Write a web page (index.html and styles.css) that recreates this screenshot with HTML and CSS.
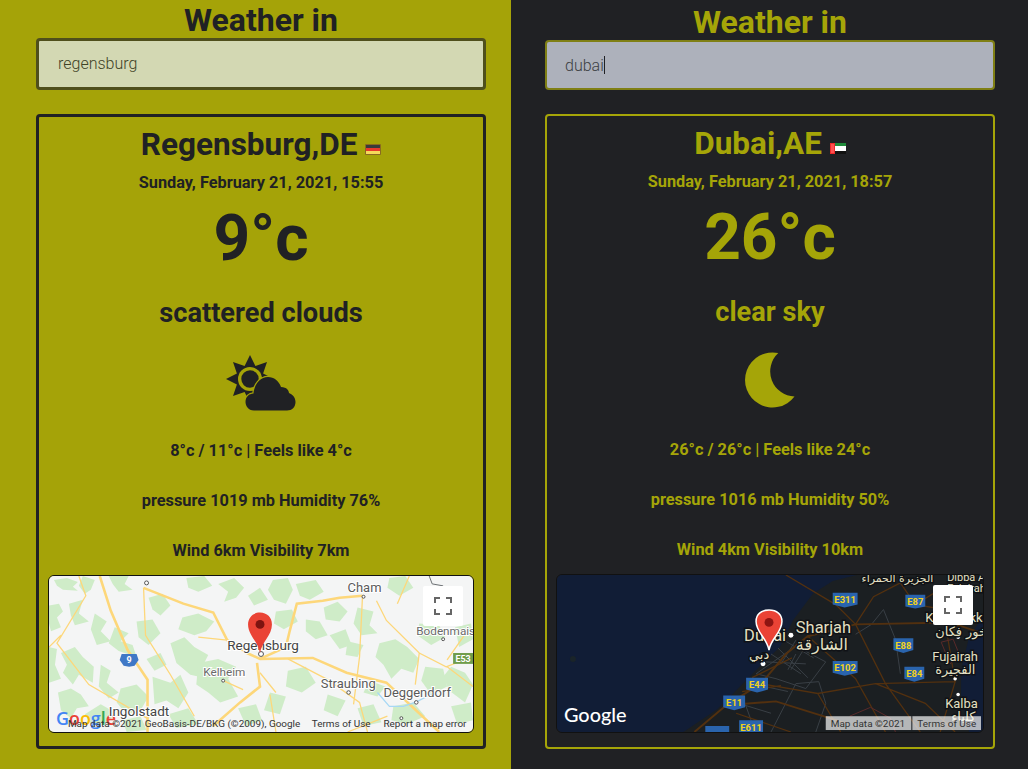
FILE: index.html
```html
<!DOCTYPE html>
<html lang="en">
<head>
<meta charset="utf-8">
<title>Weather</title>
<link rel="stylesheet" href="styles.css">
</head>
<body>
<main class="app">
  <section class="pane pane-light">
    <h1 class="title">Weather in</h1>
    <input class="search" type="text" value="regensburg" aria-label="City">
    <article class="card">
      <h2 class="city">Regensburg,DE
        <svg class="flag" viewBox="0 0 16 11"><rect width="16" height="11" rx="1" fill="#8a6a20"/><rect x="1" y="1" width="14" height="3" fill="#3a3a3a"/><rect x="1" y="4" width="14" height="3" fill="#e8382c"/><rect x="1" y="7" width="14" height="3" fill="#f5d95a"/></svg>
      </h2>
      <p class="date">Sunday, February 21, 2021, 15:55</p>
      <p class="temp">9°c</p>
      <p class="desc">scattered clouds</p>
      <div class="icon">
        <svg width="68" height="60" viewBox="0 0 68 60">
          <polygon class="ink" points="23,0 28.4,10.9 40,7 36.1,18.6 47,24 36.1,29.4 40,41 28.4,37.1 23,48 17.6,37.1 6,41 9.9,29.4 -1,24 9.9,18.6 6,7 17.6,10.9"/>
          <circle class="gap" cx="23" cy="24" r="12"/>
          <circle class="ink" cx="23" cy="24" r="8.7"/>
          <path class="ink cloud" d="M27 55.500C21 55.500 18.500 50.500 18.500 47C18.500 42 22 38.500 26.500 38.500C27 30 33 22 41 22C47 22 52 26 54 32C60 32 62 36 62 38C66 39.500 68.500 43 68.500 47C68.500 52 65 55.500 60 55.500Z"/>
        </svg>
      </div>
      <p class="line line-first">8°c / 11°c | Feels like 4°c</p>
      <p class="line">pressure 1019 mb Humidity 76%</p>
      <p class="line">Wind 6km Visibility 7km</p>
      <div class="map map-day">
        <svg class="map-art" viewBox="0 0 426 158" preserveAspectRatio="none">
          <rect width="426" height="158" fill="#f4f5f5"/>
          <g fill="#cfecc8">
            <polygon points="5,4 18,2 29,6 24,11 29,15 14,14 8,10"/><polygon points="34,0 46,4 42,14 36,18 30,10"/><polygon points="60,0 80,0 76,8 84,14 70,16 64,8"/>
            <polygon points="0,30 10,28 14,36 8,42 12,52 2,56 0,48"/><polygon points="20,28 34,24 30,38 40,46 26,50 22,40"/><polygon points="46,38 58,46 52,56 62,66 48,70 42,54"/>
            <polygon points="66,52 80,58 72,66 84,70 88,82 70,76 60,68"/><polygon points="12,78 26,72 34,82 45,92 44,108 30,100 24,110 14,98 18,90"/><polygon points="0,72 8,74 6,90 12,104 0,108"/>
            <polygon points="52,90 62,96 58,108 70,118 60,124 50,112"/><polygon points="9,118 22,114 32,120 40,132 28,134 22,144 12,136"/><polygon points="36,140 52,130 66,138 60,148 42,150"/>
            <polygon points="72,114 88,110 100,122 92,136 78,140 68,128"/><polygon points="104,102 122,108 132,100 140,118 130,134 118,126 106,130"/><polygon points="122,68 136,62 146,72 160,80 154,92 160,104 142,100 128,88"/>
            <polygon points="150,88 170,84 188,92 180,104 190,122 172,128 160,118 148,110"/><polygon points="134,42 150,38 166,46 158,56 146,60 130,54"/><polygon points="100,22 114,18 122,30 112,40 104,34"/>
            <polygon points="88,46 104,44 112,58 100,70 90,62"/><polygon points="112,78 118,90 106,96 98,84"/><polygon points="170,8 186,2 196,12 188,22 176,26 180,16"/>
            <polygon points="138,2 156,0 164,10 150,16 140,12"/><polygon points="200,20 212,12 220,24 206,30"/><polygon points="225,4 240,2 245,14 238,28 226,24 220,14"/>
            <polygon points="248,8 268,4 276,16 262,24 252,20"/><polygon points="276,32 290,26 300,36 292,46 278,44"/><polygon points="228,36 244,34 250,46 236,54 226,48"/>
            <polygon points="258,44 272,46 280,60 268,64 258,56"/><polygon points="282,60 298,54 304,70 292,74"/><polygon points="310,32 326,36 322,50 330,58 314,60 306,48"/>
            <polygon points="332,68 348,64 360,72 372,84 366,98 354,94 344,104 336,90 328,82"/><polygon points="300,66 316,70 310,82 298,80"/><polygon points="385,14 400,18 410,30 404,42 392,38 380,28"/>
            <polygon points="342,2 358,0 366,12 352,20 340,12"/><polygon points="372,48 392,50 398,62 384,70 370,60"/><polygon points="408,52 424,48 426,64 412,72"/>
            <polygon points="404,92 418,98 426,110 418,128 402,116 396,102"/><polygon points="378,92 396,94 400,112 384,120 374,106"/><polygon points="322,106 338,112 330,122 316,118"/>
            <polygon points="240,96 258,92 268,108 254,118 238,112"/><polygon points="222,118 238,122 232,140 216,136"/><polygon points="280,120 298,126 290,142 276,136"/>
            <polygon points="346,132 366,128 378,142 360,150 344,146"/><polygon points="404,132 424,128 426,146 410,150"/><polygon points="310,134 326,130 334,148 316,152"/>
            <polygon points="190,134 208,130 214,146 198,152"/><polygon points="120,140 140,134 150,150 128,154"/><polygon points="74,146 92,142 98,156 78,158"/>
          </g>
          <g fill="none" stroke="#fdd77a">
            <path stroke-width="2.600" d="M51 0 62 35 79 75 99 105 99 158M95 12 135 28 165 37 179 65 199 78 212 84 265 83 299 98 339 108 392 158"/>
            <path stroke-width="2.600" d="M209 88 212 112 192 128 165 152M212 84 238 72 242 55 249 28 275 25 292 22 315 20"/>
            <path stroke-width="1.300" d="M30 0 37 20 8 68 40 110 100 145M95 12 97 60 122 100 146 142M179 65 150 62M240 84 280 105 312 128 320 158M315 20 312 82 306 130M329 25 339 45 372 78 399 92 425 82M400 92 426 112M350 28 362 0M212 98 228 118M420 56 400 85M222 120 228 158M175 106 195 115M372 78 368 110M0 72 12 60M340 142 300 158"/>
          </g>
          <path fill="none" stroke="#a7d8f5" stroke-width="1.200" d="M330 118 342 132 356 132 368 128 388 118"/>
          <path fill="none" stroke="#6b6f73" d="M382 0 385 8 396 10"/>
          <path fill="#3f78c6" d="M73 79H88L90 85 86 91 80.500 92 75 91 71 85Z"/>
          <text class="shield-text" x="80.500" y="88.500" text-anchor="middle">9</text>
          <rect x="406" y="78" width="20" height="11" fill="#6f9c4b"/>
          <text class="shield-text" x="416" y="87" text-anchor="middle">E53</text>
          <g class="dot-day"><circle cx="98" cy="7" r="2"/><circle cx="213" cy="79" r="2.500"/><circle cx="175" cy="106" r="1.500"/><circle cx="316" cy="21" r="1.500"/><circle cx="396" cy="64" r="1.500"/><circle cx="301" cy="118" r="1.800"/><circle cx="369" cy="128" r="1.800"/><circle cx="354" cy="144" r="1.500"/></g>
          <text class="place big" x="179" y="75">Regensburg</text>
          <text class="place" x="300" y="16">Cham</text>
          <text class="place small" x="369" y="60">Bodenmais</text>
          <text class="place small" x="155" y="101">Kelheim</text>
          <text class="place" x="273" y="113">Straubing</text>
          <text class="place" x="336" y="123">Deggendorf</text>
          <text class="logo-color" x="7" y="151"><tspan fill="#4285f4">G</tspan><tspan fill="#ea4335">o</tspan><tspan fill="#fbbc05">o</tspan><tspan fill="#4285f4">g</tspan><tspan fill="#34a853">l</tspan><tspan fill="#ea4335">e</tspan></text>
          <text class="place big" x="60" y="142">Ingolstadt</text>
          <text class="legal" x="19" y="153">Map data ©2021 GeoBasis-DE/BKG (©2009), Google</text>
          <text class="legal" x="264" y="153">Terms of Use</text>
          <text class="legal" x="336" y="153">Report a map error</text>
          <path class="pin" d="M212 78C210 66 200 60 200 49C200 42 205 37 212 37S224 42 224 49C224 60 214 66 212 78Z"/>
          <circle cx="212" cy="49" r="4.500" fill="#7d1310"/>
        </svg>
        <button class="full-btn" type="button" aria-label="Fullscreen">
          <svg width="18" height="18" viewBox="0 0 18 18"><path class="corners" d="M1 6V1H6M12 1H17V6M17 12V17H12M6 17H1V12"/></svg>
        </button>
      </div>
    </article>
  </section>

  <section class="pane pane-dark">
    <h1 class="title">Weather in</h1>
    <div class="search search-typing"><span>dubai</span><i class="caret"></i></div>
    <article class="card">
      <h2 class="city">Dubai,AE
        <svg class="flag" viewBox="0 0 16 11"><rect width="16" height="11" fill="#111"/><rect x="5" y="0" width="11" height="3" fill="#1f8a3a"/><rect x="5" y="3" width="11" height="5" fill="#fff"/><rect width="5" height="11" fill="#ee2a2a"/><rect x="1" y="1" width="3" height="9" fill="#ff5050"/></svg>
      </h2>
      <p class="date">Sunday, February 21, 2021, 18:57</p>
      <p class="temp">26°c</p>
      <p class="desc">clear sky</p>
      <div class="icon">
        <svg width="52" height="60" viewBox="0 0 52 60"><path class="ink" d="M34.300 1.100A27.500 27.500 0 1 0 50.500 44.500A25 25 0 0 1 34.300 1.100Z"/></svg>
      </div>
      <p class="line line-first">26°c / 26°c | Feels like 24°c</p>
      <p class="line">pressure 1016 mb Humidity 50%</p>
      <p class="line">Wind 4km Visibility 10km</p>
      <div class="map map-night">
        <svg class="map-art" viewBox="0 0 428 159" preserveAspectRatio="none">
          <rect width="428" height="159" fill="#111d36"/>
          <path fill="#1b1f22" d="M127 159 161 136 181 116 207 89 224 73 237 46 257 19 277 6 301 0H428V42L414 63 406 96 406 129 411 143 414 159Z"/>
          <g fill="none" stroke="#3a4046" stroke-width="1"><path d="M215 159 240 110 263 108 270 130 260 159M340 65 328 35 316 50 300 60M340 65 345 100M200 100 240 72 270 88 250 115 220 105Z"/><path d="M210 88 250 90M222 74 252 104M232 96 240 80M215 80 245 100M228 66 258 84M240 66 225 90M250 72 235 96M196 110 232 118M176 128 215 140M186 122 196 150"/></g>
          <g fill="none" stroke="#52300f" stroke-width="1.300">
            <path stroke-width="2" d="M138 159 170 132 205 110 230 80 252 62 300 50 395 48 430 60M170 132 220 128 290 150"/>
            <path d="M205 110 262 120 320 110 400 108M252 62 300 105 330 159M300 50 330 110 365 159M300 50 318 22 345 8 360 30 420 40 392 60 400 108 385 159M262 120 285 159M230 0 280 30 300 50M360 30 400 5M320 110 370 130 400 159M180 140 235 159M196 104 236 84M186 118 225 112"/>
          </g>
          <path fill="none" stroke="#5a2a2a" d="M294 143 315 134 335 145 340 159M386 68 398 65 404 80 395 90Z"/>
          <g fill="#2a64ad">
            <path d="M190 104H212V116L201 119 190 116Z"/><path d="M167 122H189V134L178 137 167 134Z"/><path d="M149 153H173V162H149Z"/><path d="M183 147H207V162H183Z"/>
            <path d="M277 18H302V30L289 33 277 30Z"/><path d="M350 20H370V32L360 34 350 32Z"/><path d="M338 64H358V76L348 79 338 76Z"/><path d="M277 87H302V99L289 102 277 99Z"/><path d="M349 93H369V105L359 108 349 105Z"/>
          </g>
          <g class="shield-night" text-anchor="middle">
            <text x="201" y="114.500">E44</text><text x="178" y="132.500">E11</text><text x="195" y="158">E611</text><text x="289.500" y="28.500">E311</text><text x="360" y="30.500">E87</text><text x="348" y="74.500">E88</text><text x="289.500" y="97.500">E102</text><text x="359" y="103.500">E84</text>
          </g>
          <g fill="#fff"><circle cx="207" cy="90" r="2.500"/><circle cx="235" cy="61" r="2.500"/><circle cx="403" cy="63" r="1.800"/><circle cx="400" cy="105" r="1.800"/><circle cx="403" cy="121" r="1.800"/></g>
          <circle cx="16" cy="85" r="3" fill="#1a2429"/>
          <text class="halo halo-big" x="188" y="67">Dubai</text>
          <text class="halo arabic" x="193" y="85">دبي</text>
          <text class="halo halo-big" x="240" y="59">Sharjah</text>
          <text class="halo arabic halo-ar" x="240" y="76">الشارقة</text>
          <text class="halo" x="377" y="87">Fujairah</text>
          <text class="halo arabic" x="380" y="100">الفجيرة</text>
          <text class="halo" x="390" y="135">Kalba</text>
          <text class="halo arabic" x="396" y="148">كلباء</text>
          <text class="halo" x="370" y="48">Khor Fakkan</text>
          <text class="halo arabic" x="380" y="62">خور فكان</text>
          <text class="halo tiny" x="392" y="6">Dibba Al</text>
          <text class="halo tiny" x="392" y="17">Fujairah</text>
          <text class="halo arabic tiny" x="306" y="7">الجزيرة الحمراء</text>
          <text class="logo-white" x="7" y="149">Google</text>
          <rect x="270" y="143" width="86" height="14" fill="#fff" fill-opacity=".68"/>
          <rect x="357" y="143" width="69" height="14" fill="#fff" fill-opacity=".68"/>
          <text class="legal" x="275" y="154">Map data ©2021</text>
          <text class="legal" x="362" y="154">Terms of Use</text>
          <path class="pin pin-outline" d="M213 76C211 64 200 58 200 47C200 40 205 35.500 213 35.500S226 40 226 47C226 58 215 64 213 76Z"/>
          <circle cx="213" cy="48" r="4.500" fill="#8e1512"/>
        </svg>
        <button class="full-btn" type="button" aria-label="Fullscreen">
          <svg width="18" height="18" viewBox="0 0 18 18"><path class="corners" d="M1 6V1H6M12 1H17V6M17 12V17H12M6 17H1V12"/></svg>
        </button>
      </div>
    </article>
  </section>
</main>
</body>
</html>
```
FILE: styles.css
```css
* { box-sizing: border-box; }
html, body { margin: 0; height: 100%; }
body { font-family: Roboto, "Liberation Sans", sans-serif; overflow: hidden; }

.app { display: grid; grid-template-columns: 511px 517px; height: 769px; }
.pane { height: 769px; display: flex; flex-direction: column; }
.pane-light { background: #a5a308; color: #202124; padding: 0 25px 0 36px; }
.pane-dark { background: #202124; color: #a5a508; padding: 0 33px 0 34px; }

.title { margin: 0; height: 38px; font-size: 32px; line-height: 40px; font-weight: 700; text-align: center; }
.pane-dark .title { height: 40px; line-height: 44px; }

.search {
  display: block; width: 450px; height: 52px; margin: 0 0 24px;
  padding: 0 18px 2px 19px; border-radius: 4px; font: 300 16px Roboto, sans-serif;
  border: 3px solid #4f4f1c; background: #d3d8b3; color: #3f4226; outline: none;
}
.search-typing {
  display: flex; align-items: center; height: 50px; padding: 0 18px;
  border: 2px solid #7f7f14; background: #adb1bb; color: #3c4043; font-weight: 300;
}
.caret { display: block; width: 1px; height: 18px; background: #202124; }

.card { flex: none; height: 635px; border: 3px solid #202124; border-radius: 4px; padding: 8px 9px 13px; text-align: center; }
.pane-dark .card { border: 2px solid #a5a508; }

.city { margin: 0; font-size: 31.500px; line-height: 40px; font-weight: 700; }
.flag { display: inline-block; width: 16px; height: 11px; vertical-align: 0; }
.date { margin: 6px 0 0; font-size: 16.320px; line-height: 24px; font-weight: 700; }
.temp { margin: 6px 0 0; font-size: 64px; line-height: 76px; font-weight: 700; }
.desc { margin: 20px 0 0; font-size: 27.200px; line-height: 32px; font-weight: 700; }

.icon { height: 60px; margin-top: 26px; display: flex; justify-content: center; }
.pane-dark .icon { margin-top: 24px; }
.icon svg { display: block; overflow: visible; }
.pane-light .ink { fill: #202124; }
.pane-dark .ink { fill: #a5a508; }
.gap { fill: #a5a308; }
.cloud { stroke: #a5a308; stroke-width: 2.500; paint-order: stroke; }

.line { margin: 26px 0 0; font-size: 16.320px; line-height: 24px; font-weight: 700; }
.line-first { margin-top: 24px; }
.pane-dark .line-first { margin-top: 26px; }
.line + .map { margin-top: 12px; }

.map { position: relative; border: 1px solid #111; border-radius: 6px; overflow: hidden; }
.map-day { height: 158px; }
.map-night { height: 159px; }
.map-art { display: block; width: 100%; height: 100%; }

.full-btn { position: absolute; top: 10px; right: 10px; width: 40px; height: 40px; padding: 0; border: 0; border-radius: 2px; background: #fff; display: flex; align-items: center; justify-content: center; }
.corners { fill: none; stroke: #666; stroke-width: 2; }

.pin { fill: #ea4335; }
.pin-outline { stroke: #fff; stroke-width: 1.500; }
.dot-day { fill: #fff; stroke: #555; stroke-width: 1; }

.place { font: 400 13px Roboto, sans-serif; fill: #5a5a5a; stroke: #fff; stroke-width: 2px; paint-order: stroke; }
.place.big { font-size: 13.600px; fill: #444; }
.place.small { font-size: 11.800px; fill: #6b6b6b; }
.shield-text { font: 700 9px Roboto, sans-serif; fill: #fff; }
.shield-night { font: 700 9.500px Roboto, sans-serif; fill: #f2d21c; }
.legal { font: 400 10px Roboto, sans-serif; fill: #333; }
.logo-color { font: 600 18px "Open Sans", sans-serif; }
.logo-white { font: 500 20px Lato, sans-serif; fill: #fff; }

.halo { font: 400 13px Roboto, "DejaVu Sans", sans-serif; fill: #e4e0c4; stroke: #101216; stroke-width: 3px; paint-order: stroke; }
.halo-big { font-size: 16.500px; }
.halo-ar { font-size: 16px; }
.arabic { font-family: "DejaVu Sans", sans-serif; }
.tiny { font-size: 11px; }
```
